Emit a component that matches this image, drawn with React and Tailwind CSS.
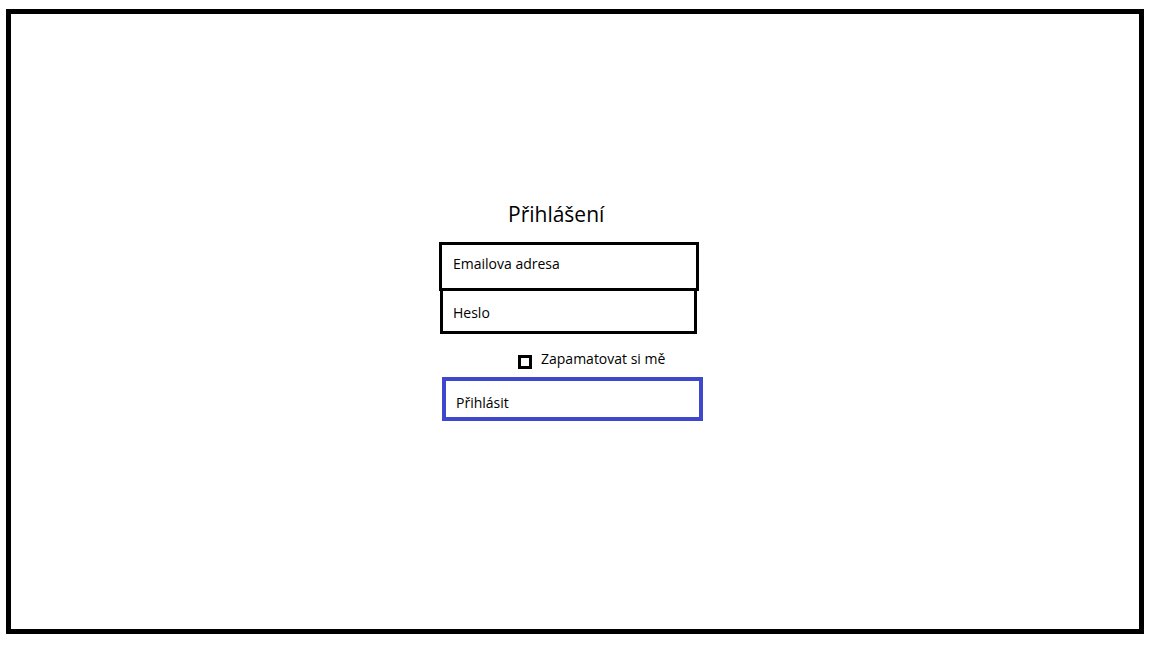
import { useState } from 'react'

export default function App() {
  const [remember, setRemember] = useState(false)

  return (
    <div className="w-[1152px] h-[648px] bg-white pl-[6px] pt-[9px]" style={{ fontFamily: '"Open Sans", "Noto Sans", sans-serif' }}>
      {/* Frame */}
      <div className="w-[1138px] h-[625px] border-[5px] border-black pl-[428px] pt-[186px]">
        <div className="flex flex-col items-start text-black">
          <h1 className="ml-[69px] text-[21px] leading-[28px] font-normal">Přihlášení</h1>

          <div className="mt-[14px] w-[260px] h-[49px] border-[3px] border-black pl-[11px] pt-[9px] text-[14px] leading-[20px]">
            Emailova adresa
          </div>
          <div className="-mt-[3px] ml-[1px] w-[257px] h-[46px] border-[3px] border-black pl-[10px] pt-[12px] text-[14px] leading-[20px]">
            Heslo
          </div>

          <label className="mt-[15px] ml-[79px] flex items-start gap-[9px] cursor-pointer">
            <button
              type="button"
              onClick={() => setRemember(!remember)}
              className={`mt-[6px] w-[14px] h-[14px] border-[3px] border-black ${remember ? 'bg-black' : 'bg-white'}`}
            />
            <span className="text-[14px] leading-[20px]">Zapamatovat si mě</span>
          </label>

          <button
            type="button"
            className="mt-[8px] ml-[3px] w-[261px] h-[44px] border-[4px] border-[#3f48cc] pl-[10px] pt-[7px] text-left text-[14px] leading-[20px] self-start"
          >
            <span className="block">Přihlásit</span>
          </button>
        </div>
      </div>
    </div>
  )
}
